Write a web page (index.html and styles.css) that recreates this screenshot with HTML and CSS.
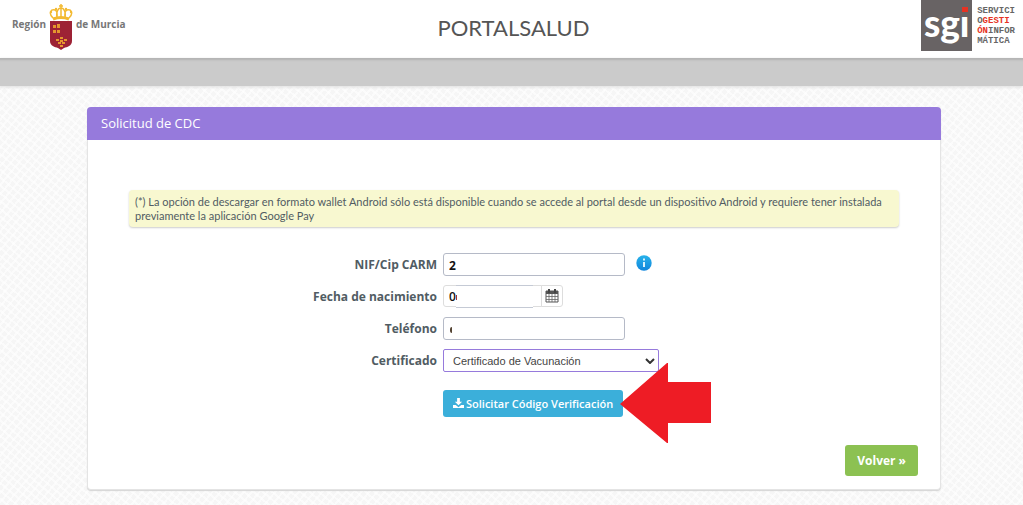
FILE: index.html
```html
<!DOCTYPE html>
<html lang="es">
<head>
<meta charset="utf-8">
<title>PORTALSALUD</title>
<link rel="stylesheet" href="styles.css">
</head>
<body>
<header class="top">
  <div class="region">
    <span>Región</span>
    <svg class="crest" viewBox="0 0 24 48" aria-hidden="true">
      <g fill="none" stroke="#f3ba32" stroke-width="1.5">
        <path d="M4 14C-1 9 2 5 6 6c3 1 2 5 2 8M20 14c5-5 2-9-2-8-3 1-2 5-2 8M8 14C7 8 9 4 12 4s5 4 4 10M12 4v9M12 0v4M10 2h4"/>
        <path d="M4 15q8-3 16 0" stroke-width="3"/>
      </g>
      <g fill="#f3ba32"><circle cx="2" cy="8" r="1.2"/><circle cx="22" cy="8" r="1.2"/><circle cx="7" cy="5" r="1.2"/><circle cx="17" cy="5" r="1.2"/></g>
      <path d="M1 17h22v20c0 5-5 6-8 7l-3 2-3-2c-3-1-8-2-8-7z" fill="#9d2235"/>
      <g fill="#e5962e"><path d="M4 21h3v3H4zM8 20h3v4H8zM4 26h3v3H4zM8 26h3v3H8z"/><path d="M11 33h3v2h-3zM7 35h3v2H7zM15 35h3v2h-3zM9 38h3v2H9zM13 38h3v2h-3zM11 36h3v2h-3zM11 41h3v2h-3z"/></g>
    </svg>
    <span>de Murcia</span>
  </div>
  <h1 class="title">PORTALSALUD</h1>
  <div class="sgi">
    <svg class="sgi-mark" viewBox="0 0 51 51" role="img" aria-label="sgi">
      <rect width="51" height="51" fill="#686364"/>
      <text class="sgi-text" x="3" y="37">sgi</text>
      <rect x="39" y="4" width="10" height="12" fill="#686364"/>
      <rect x="41" y="7" width="6" height="5" fill="#e63323"/>
    </svg>
    <div class="sgi-name">SERVICI<br>O<b>GESTI</b><br><b>ÓN</b>INFOR<br>MÁTICA</div>
  </div>
</header>
<nav class="bar"></nav>
<main class="page">
  <section class="card">
    <h2 class="card-title">Solicitud de CDC</h2>
    <div class="card-body">
      <p class="notice">(*) La opción de descargar en formato wallet Android sólo está disponible cuando se accede al portal desde un dispositivo Android y requiere tener instalada previamente la aplicación Google Pay</p>
      <form class="form">
        <label for="nif">NIF/Cip CARM</label>
        <div class="field">
          <input class="text" id="nif" type="text" value="2">
          <svg class="info" viewBox="0 0 16 16" aria-hidden="true"><defs><linearGradient id="blue" x2="0" y2="1"><stop stop-color="#27b2ea"/><stop offset="1" stop-color="#1186dc"/></linearGradient></defs><circle cx="8" cy="8" r="7.7" fill="url(#blue)"/><path d="M7 3.500h2v2H7zM7 7h2v5H7z" fill="#d9f2fc"/></svg>
        </div>
        <label for="fecha">Fecha de nacimiento</label>
        <div class="field date">
          <input class="text date-text" id="fecha" type="text" value="0">
          <span class="mask"></span>
          <button class="cal" type="button" aria-label="Calendario"><svg viewBox="0 0 14 14"><path d="M1 2h12v11H1z" fill="#fff" stroke="#555"/><path d="M1 2h12v3H1z" fill="#555"/><path d="M4 0v4M10 0v4" stroke="#444" stroke-width="2"/><path d="M4 5v8M7 5v8M10 5v8M1 7.500h12M1 10.500h12" stroke="#666" stroke-width=".8"/></svg></button>
        </div>
        <label for="tel">Teléfono</label>
        <div class="field tel"><input class="text" id="tel" type="text"><span class="mark"></span></div>
        <label for="cert">Certificado</label>
        <div class="field pick">
          <select class="select" id="cert"><option>Certificado de Vacunación</option></select>
          <svg class="chevron" viewBox="0 0 10 6" aria-hidden="true"><path d="M1 1l4 4 4-4" fill="none" stroke="#333" stroke-width="2"/></svg>
        </div>
        <div class="action">
          <button class="btn send" type="button"><svg viewBox="0 0 12 12" aria-hidden="true"><path d="M4.500 0h3v4H10L6 8 2 4h2.500z" fill="#fff"/><path d="M0 7.500h3l3 2.500 3-2.500h3V11H0z" fill="#fff"/></svg>Solicitar Código Verificación</button>
          <svg class="arrow" viewBox="0 0 91 80" aria-hidden="true"><path d="M0 41L47 0h1v19h43v41H48v20h-1z" fill="#ee1c25"/></svg>
        </div>
      </form>
    </div>
    <footer class="card-foot"><button class="btn back" type="button">Volver »</button></footer>
  </section>
</main>
</body>
</html>
```
FILE: styles.css
```css
* { box-sizing: border-box; }
body {
  margin: 0;
  min-height: 100vh;
  color: #515c63;
  font-family: "Open Sans", "Liberation Sans", sans-serif;
  background:
    repeating-linear-gradient(40deg, transparent 0 4px, rgba(255,255,255,.6) 4px 6px),
    repeating-linear-gradient(130deg, transparent 0 4px, rgba(255,255,255,.6) 4px 6px),
    #f6f6f6;
}
.top {
  display: grid;
  grid-template-columns: 1fr auto 1fr;
  height: 58px;
  padding: 0 8px 0 12px;
  background: #fff;
}
.region {
  display: flex;
  align-items: flex-start;
  gap: 3px;
  padding-top: 4px;
  color: #777;
  font-size: 10px;
  font-weight: 700;
  line-height: 40px;
}
.crest { width: 24px; height: 48px; }
.title {
  margin: 0;
  padding-top: 14px;
  color: #555;
  font: 400 22px/28px Lato, sans-serif;
}
.sgi { display: flex; justify-content: flex-end; gap: 5px; }
.sgi-mark { width: 51px; height: 51px; }
.sgi-text { fill: #fff; font: 900 37px Lato, sans-serif; }
.sgi-name {
  padding-top: 6px;
  color: #666;
  font: 700 9px/10px "Liberation Mono", monospace;
}
.sgi-name b { color: #e63323; }
.bar {
  height: 28px;
  background: #cbcbcb;
  box-shadow: inset 0 4px 2px -2px #b4b4b4, 0 1px 3px #ddd;
}
.page { padding: 21px 82px 15px 87px; }
.card {
  background: #fff;
  border: 1px solid #e4e4e4;
  border-top: 0;
  border-radius: 4px;
  box-shadow: 0 1px 1px #d5d5d5;
}
.card-title {
  margin: 0 -1px;
  padding: 0 14px;
  border-radius: 4px 4px 0 0;
  background: #967adc;
  color: #fff;
  font-size: 13px;
  font-weight: 400;
  line-height: 33px;
}
.card-body { padding: 50px 41px 0; }
.notice {
  margin: 0 0 26px;
  padding: 5px 6px 4px;
  border-radius: 4px;
  background: #f8f8d0;
  box-shadow: 0 1px 2px #ccc;
  font: 11px/14px Lato, sans-serif;
}
.form {
  display: grid;
  grid-template-columns: 40% 1fr;
  column-gap: 6px;
  row-gap: 9px;
}
.form label {
  text-align: right;
  font-size: 12px;
  font-weight: 700;
  line-height: 23px;
}
.field { display: flex; align-items: flex-start; position: relative; }
.text {
  width: 182px;
  height: 23px;
  padding: 2px 5px 0;
  border: 1px solid #b5bac7;
  border-radius: 3px;
  background: #fff;
  color: #111;
  font: 700 12px "Open Sans", sans-serif;
}
.info { width: 16px; height: 16px; margin: 2px 0 0 11px; }
.date-text {
  width: 99px;
  height: 22px;
  padding-top: 0;
  border-color: #ddd;
  border-radius: 3px 0 0 3px;
  font-weight: 600;
}
.mask {
  position: absolute;
  left: 13px;
  top: 0;
  width: 77px;
  height: 23px;
  border: solid #c5cad5;
  border-width: 1px 0;
  background: linear-gradient(#a33, #a33) 0 9px / 1px 5px no-repeat #fff;
  pointer-events: none;
}
.cal {
  width: 22px;
  height: 22px;
  margin-left: -1px;
  padding: 0;
  border: 1px solid #ddd;
  border-radius: 0 3px 3px 0;
  background: #fff;
}
.cal svg { display: block; width: 14px; height: 14px; margin: auto; }
.mark {
  position: absolute;
  left: 7px;
  top: 10px;
  width: 2px;
  height: 6px;
  border-left: 2px solid #543;
  border-radius: 2px 0 0 2px;
}
.select {
  width: 216px;
  height: 23px;
  padding: 0 9px;
  appearance: none;
  border: 1px solid #967adc;
  border-radius: 2px;
  background: #fff;
  color: #444;
  font: 11px "Liberation Sans", sans-serif;
}
.chevron {
  position: absolute;
  left: 202px;
  top: 9px;
  width: 10px;
  height: 6px;
  pointer-events: none;
}
.action {
  grid-column: 2;
  justify-self: start;
  position: relative;
  margin-top: 9px;
}
.btn {
  display: flex;
  align-items: center;
  border: 0;
  border-radius: 3px;
  color: #fff;
  font: 700 12px "Open Sans", sans-serif;
}
.send {
  height: 27px;
  padding: 0 10px;
  gap: 2px;
  background: #3bafda;
  font-size: 11px;
  font-weight: 600;
}
.send svg { width: 11px; height: 11px; }
.arrow {
  position: absolute;
  left: 177px;
  top: -27px;
  width: 91px;
  height: 80px;
}
.card-foot {
  display: flex;
  justify-content: flex-end;
  padding: 28px 22px 13px;
}
.back { height: 31px; padding: 0 12px; background: #8cc152; }
```
